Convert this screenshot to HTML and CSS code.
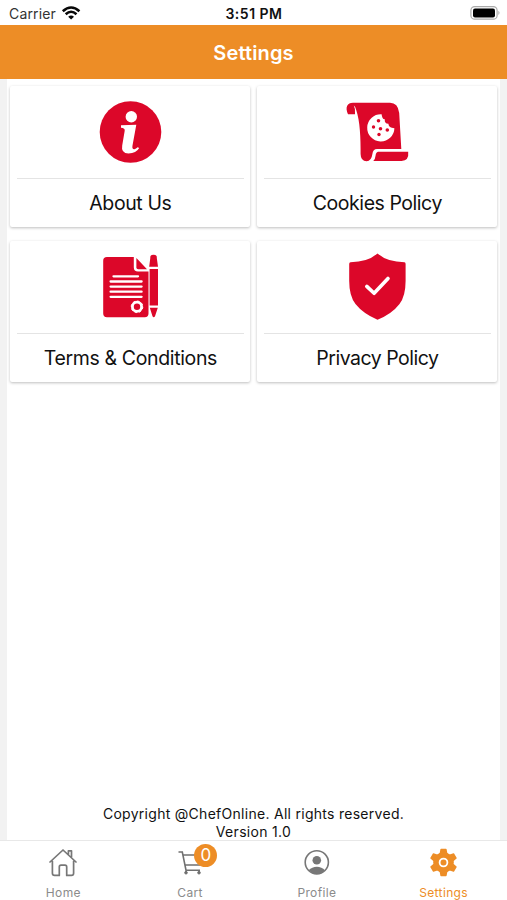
FILE: index.html
```html
<!DOCTYPE html>
<html lang="en">
<head>
<meta charset="utf-8">
<title>Settings</title>
<link rel="stylesheet" href="styles.css">
</head>
<body>
<div class="status">
  <div class="carrier"><span>Carrier</span>
    <svg width="20" height="16" viewBox="61 5 20 16" fill="none" stroke="#080808" stroke-width="2.6"><path d="M62.8 11.2Q71.1 3.8 79.4 11.2M65.7 14.2Q71.1 9.3 76.5 14.2"/><path d="M68.2 16.7Q71.1 14.4 74 16.7L71.1 19.5Z" fill="#080808" stroke="none"/></svg>
  </div>
  <div class="time">3:51 PM</div>
  <svg class="battery" width="32" height="16" viewBox="469 5 32 16"><rect x="470.9" y="6.6" width="26.2" height="12.6" rx="3.8" fill="#fff" stroke="#aaa" stroke-width="1.2"/><rect x="473" y="8.4" width="22" height="9" rx="2" fill="#000"/><path d="M498.4 10.8Q500.6 12.9 498.4 15Z" fill="#aaa"/></svg>
</div>
<header class="header"><h1>Settings</h1></header>
<main class="content">
  <div class="grid">
    <section class="card">
      <svg class="icon" viewBox="90 86 80 92"><circle cx="130.5" cy="132" r="30.8" fill="#dc0729"/><circle cx="131.3" cy="116.7" r="5.7" fill="#fff"/><path fill="#fff" d="M121 125.2L136.3 124.7L132.5 145.5Q131.8 149.6 134.5 149.2Q136 148.8 137.6 147.2L139.2 148Q136.2 153.4 128.5 153.4Q120.8 153.2 122.2 145.4L124.7 130.8Q125.2 128.2 121 127.8Z"/></svg>
      <h2 class="t-about">About Us</h2>
    </section>
    <section class="card">
      <svg class="icon" viewBox="337 86 80 92"><path fill="#dc0729" d="M353 102.8H390Q398 102.8 399.2 113L401.3 149H377Q373 149 372.4 154Q371.4 161.2 366.6 161.2Q360.7 161.2 360.6 154C360.7 138 360 121 356.2 110Q355.3 106.3 353.8 105.6Q355.7 109 355 114.2H348Q345.6 109 347.2 105.8Q348.6 102.8 353 102.8Z"/><path fill="#dc0729" d="M378 151.8H408.2Q409.2 160.9 401.5 160.9H373.3Q375.3 159 375.6 155.5Q375.9 152.2 378 151.8Z"/><path fill="#fff" d="M381.6 114.3Q382.2 119.6 384.8 119.3Q384.2 123.6 388.4 123.8Q388.5 128 394.4 128.2A13.6 13.6 0 1 1 381.6 114.3Z"/><g fill="#dc0729"><circle cx="378.5" cy="120.8" r="1.8"/><circle cx="373.5" cy="127" r="1.7"/><circle cx="380.5" cy="128.8" r="1.8"/><circle cx="387.3" cy="130" r="1.8"/><circle cx="379" cy="134.5" r="1.7"/></g></svg>
      <h2 class="t-cookies">Cookies Policy</h2>
    </section>
    <section class="card">
      <svg class="icon" viewBox="90 241 80 92"><path fill="#dc0729" d="M107 257H133.8V267.2Q133.8 271.5 138 271.5H148.5V313.5Q148.5 317.2 144.8 317.2H107Q103.2 317.2 103.2 313.5V260.7Q103.2 257 107 257Z"/><path fill="#dc0729" d="M136.4 258L147 269.2H138.2Q136.4 269.2 136.4 267.4Z"/><path stroke="#fff" stroke-width="2.3" stroke-linecap="round" d="M113.5 276.3H138M110.6 281.5H141.6M110.6 286.6H141.6M110.6 291.7H141.6M110.6 296.8H141.6"/><circle cx="137" cy="306.8" r="4.6" fill="none" stroke="#fff" stroke-width="2.8"/><circle cx="137" cy="306.8" r="5.8" fill="none" stroke="#fff" stroke-width="1" stroke-dasharray="2.3 2.2"/><path fill="#dc0729" d="M149.2 266.8L150.3 258V256.8Q150.5 254.8 153.5 254.8Q156.6 254.8 156.8 256.8V258L158 266.8ZM149.6 269H158V305.5H149.6ZM149.8 307.8H157.8L155 316.2Q153.7 318.3 152.5 316.2Z"/></svg>
      <h2 class="t-terms">Terms &amp; Conditions</h2>
    </section>
    <section class="card">
      <svg class="icon" viewBox="337 241 80 92"><path fill="#dc0729" d="M377.5 253.4Q387 262 404.5 262.2Q405.6 262.4 405.6 264V281Q405.6 296 399.5 304Q392 313.8 377.5 319.8Q363 313.5 355.5 304Q349.2 296 349.2 281V264Q349.2 262.4 350.5 262.2Q368 262 377.5 253.4Z"/><path fill="none" stroke="#fff" stroke-width="3.6" stroke-linecap="round" stroke-linejoin="round" d="M366.8 286.4L374.1 293.3L388 278.5"/></svg>
      <h2 class="t-privacy">Privacy Policy</h2>
    </section>
  </div>
  <footer class="legal"><p class="copy">Copyright @ChefOnline. All rights reserved.</p><p class="ver">Version 1.0</p></footer>
</main>
<nav class="tabs">
  <a class="tab"><svg viewBox="44 846 40 34" fill="none" stroke="#777" stroke-width="1.7" stroke-linejoin="round" stroke-linecap="round"><path d="M53.4 861.3V873.2Q53.4 875.4 55.6 875.4H60.3V867Q60.3 865.2 62 865.2H66Q67.7 865.2 67.7 867V875.4H72.5Q74.6 875.4 74.6 873.2V861.3M51 862L64 850L77 862M69.4 854.5V850.8H72.5V857"/></svg><span>Home</span></a>
  <a class="tab"><svg viewBox="170 846 40 34" fill="none" stroke="#707070" stroke-width="1.6"><path d="M178.5 852H182.3L186 870.2H200M183.2 855H202L200 865H185.1"/><circle cx="186" cy="872.7" r="1.3" fill="#707070" stroke-width="1"/><circle cx="199" cy="872.7" r="1.3" fill="#707070" stroke-width="1"/></svg><span>Cart</span><b class="badge">0</b></a>
  <a class="tab"><svg viewBox="297 846 40 34"><circle cx="316.8" cy="862.3" r="11.6" fill="none" stroke="#777" stroke-width="1.6"/><circle cx="316.8" cy="860.2" r="4.3" fill="#777"/><path fill="#777" d="M308.6 870.2Q312 866.7 316.8 866.7Q321.7 866.7 325 870.2Q321.6 873.8 316.8 873.8Q312 873.8 308.6 870.2Z"/></svg><span>Profile</span></a>
  <a class="tab active"><svg viewBox="424 846 40 34"><g fill="#ed8d26"><circle cx="443.5" cy="862.5" r="10.3"/><g id="tooth"><path d="M439.5 854L440.4 849.2Q440.5 848.8 441 848.8H446Q446.5 848.8 446.6 849.2L447.5 854V871L446.6 875.8Q446.5 876.2 446 876.2H441Q440.5 876.2 440.4 875.8L439.5 871Z"/></g><use href="#tooth" transform="rotate(60 443.5 862.5)"/><use href="#tooth" transform="rotate(120 443.5 862.5)"/></g><circle cx="443.5" cy="862.5" r="3.9" fill="none" stroke="#fff" stroke-width="1.8"/></svg><span>Settings</span></a>
</nav>
</body>
</html>
```
FILE: styles.css
```css
* { box-sizing: border-box; }
body {
  margin: 0;
  width: 507px;
  height: 900px;
  display: flex;
  flex-direction: column;
  overflow: hidden;
  background: #fff;
  color: #111;
  font-family: Inter, "Liberation Sans", sans-serif;
}
h1, h2, p { margin: 0; font-weight: 400; white-space: nowrap; }
svg { display: block; flex: none; }
.status {
  height: 25px;
  flex: none;
  display: grid;
  grid-template-columns: 1fr auto 1fr;
  align-items: center;
  padding: 1px 6px 0 9px;
  font-size: 14px;
}
.carrier { display: flex; align-items: center; gap: 5px; color: #333; }
.carrier span { letter-spacing: .15px; }
.time { font-weight: 600; color: #111; letter-spacing: .5px; margin-left: -2px; }
.battery { justify-self: end; }
.header {
  height: 54px;
  flex: none;
  display: flex;
  align-items: center;
  justify-content: center;
  padding-top: 1px;
  background: #ed8d26;
  color: #fff;
}
.header h1 { font-size: 20px; font-weight: 600; letter-spacing: .15px; }
.content {
  flex: 1;
  display: flex;
  flex-direction: column;
  justify-content: space-between;
  border: solid #f2f2f2;
  border-width: 0 7px;
}
.grid {
  display: grid;
  grid-template-columns: 240px 240px;
  column-gap: 7px;
  row-gap: 14px;
  padding: 7px 0 0 3.4px;
}
.card {
  height: 141px;
  padding: 0 6.5px;
  border-radius: 2px;
  background: #fff;
  box-shadow: 0 1px 3px rgba(0, 0, 0, .26);
}
.icon { width: 80px; height: 92px; margin: 0 auto; }
.card h2 {
  height: 49px;
  border-top: 1px solid #e4e4e4;
  line-height: 49px;
  text-align: center;
  font-size: 19.5px;
}
.card .t-about { letter-spacing: -.38px; }
.card .t-cookies { letter-spacing: -.45px; }
.card .t-terms { letter-spacing: -.36px; }
.card .t-privacy { letter-spacing: -.5px; }
.legal {
  text-align: center;
  font-size: 14px;
  line-height: 17.5px;
}
.copy { letter-spacing: .28px; }
.ver { letter-spacing: .3px; }
.tabs {
  height: 60px;
  flex: none;
  display: grid;
  grid-template-columns: repeat(4, 1fr);
  border-top: 1px solid #e8e8e8;
}
.tab {
  position: relative;
  display: flex;
  flex-direction: column;
  align-items: center;
  padding-top: 5px;
  color: #8b8b8b;
  font-size: 12px;
  letter-spacing: .36px;
}
.tab svg { width: 40px; height: 34px; }
.tab span { line-height: 14px; margin-top: 6px; }
.active { color: #ed8d26; }
.badge {
  position: absolute;
  left: 67.5px;
  top: 3px;
  width: 23px;
  height: 23px;
  border-radius: 50%;
  background: #ed8d26;
  color: #fff;
  font-size: 17px;
  font-weight: 400;
  letter-spacing: 0;
  line-height: 23px;
  text-align: center;
}
```
